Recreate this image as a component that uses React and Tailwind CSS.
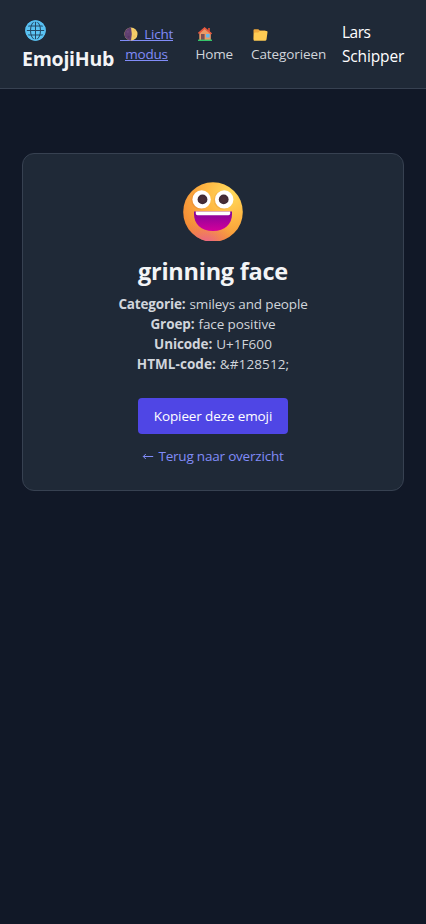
import React from "react";

function Globe() {
  return (
    <svg className="block h-[21px] w-[21px]" viewBox="0 0 21 21" fill="none">
      <defs>
        <linearGradient id="globe" x1="0" y1="0" x2="0" y2="1">
          <stop stopColor="#52b9ee" />
          <stop offset="1" stopColor="#62cdf8" />
        </linearGradient>
      </defs>
      <circle cx="10.5" cy="10.5" r="10.2" fill="url(#globe)" />
      <g stroke="#234865" strokeWidth="1">
        <path d="M10.5 1.3v18.4M1.3 10.5h18.4M3 6h15M3 15h15" />
        <ellipse cx="10.5" cy="10.5" rx="5" ry="9.2" />
      </g>
      <circle cx="10.5" cy="10.5" r="9.5" stroke="#58bff1" strokeWidth="1.5" />
    </svg>
  );
}

function Moon() {
  return (
    <svg className="mt-[4px] block h-[14px] w-[14px]" viewBox="0 0 15 15">
      <circle cx="7.5" cy="7.5" r="7" fill="#f5cd68" />
      <path d="M7.5.5a7 7 0 0 0 0 14Q9.2 7.5 7.5.5Z" fill="#604070" />
      <circle cx="4" cy="5" r="1.3" fill="#6c487a" />
      <circle cx="5" cy="10.5" r="1.2" fill="#553664" />
      <circle cx="11" cy="4" r="1" fill="#eec160" />
      <circle cx="11" cy="10" r="1.2" fill="#edc263" />
    </svg>
  );
}

function House() {
  return (
    <svg className="block h-[14px] w-[14px]" viewBox="0 0 14 14">
      <path d="M10 1h2v5h-2z" fill="#bd4b36" />
      <path d="M1.3 6 6.8 1l6 5v7H1.3z" fill="#e99b67" />
      <path d="M.5 6.5 6.6 1.1 13.5 7" fill="none" stroke="#e5573f" strokeWidth="1.6" />
      <path d="M3 7h3.6v6H3z" fill="#7b5055" />
      <path d="M8 7h3.6v3.5H8z" fill="#60b9ef" />
      <path d="M0 12.6h14V14H0z" fill="#35c56a" />
    </svg>
  );
}

function Folder() {
  return (
    <svg className="block h-[12px] w-[15px]" viewBox="0 0 15 12">
      <path d="M.5 1.2Q.5.2 1.5.2h3.8l1.5 1.3h5q1.2 0 1.2 1.2V11H1.5q-1 0-1-1z" fill="#efa83c" />
      <path d="M5.3 3.4 6.8 2h6.7q1.2 0 1 1.2l-1 7.3q-.2 1.3-1.5 1.3H1.7q-1.2 0-1-1.2l.3-6q.2-1.2 1.3-1.2z" fill="#ffcb53" />
    </svg>
  );
}

function GrinningFace() {
  return (
    <svg className="block h-[60px] w-[60px]" viewBox="0 0 60 60">
      <defs>
        <radialGradient id="skin" cx=".78" cy=".2" r=".9">
          <stop stopColor="#ffdc5e" />
          <stop offset=".45" stopColor="#ffb843" />
          <stop offset="1" stopColor="#f38b35" />
        </radialGradient>
        <radialGradient id="blush" cx=".38" cy="1.08" r=".5">
          <stop stopColor="#e85aa6" />
          <stop offset="1" stopColor="#ee7550" stopOpacity="0" />
        </radialGradient>
        <linearGradient id="mouth" x1="0" y1="0" x2="0" y2="1">
          <stop stopColor="#81049a" />
          <stop offset="1" stopColor="#d3009b" />
        </linearGradient>
        <radialGradient id="pupil">
          <stop stopColor="#4b3038" />
          <stop offset="1" stopColor="#3f2936" />
        </radialGradient>
        <clipPath id="face-edge"><path d="M0 0h60v59H0z" /></clipPath>
      </defs>
      <g clipPath="url(#face-edge)">
        <circle cx="30" cy="30" r="29.8" fill="url(#skin)" />
        <circle cx="30" cy="30" r="29.8" fill="url(#blush)" />
      </g>
      <circle cx="17.5" cy="18" r="9.4" fill="#dc7f35" opacity=".35" />
      <circle cx="40" cy="18" r="9.4" fill="#dc7f35" opacity=".25" />
      <circle cx="18.6" cy="17.4" r="9.2" fill="#fff" />
      <circle cx="41.2" cy="17.4" r="9.2" fill="#fff" />
      <circle cx="19.5" cy="17.4" r="4.9" fill="url(#pupil)" />
      <circle cx="40.7" cy="17.4" r="4.9" fill="url(#pupil)" />
      <path d="M11 29.5h38v2.5c0 10-7 17-19 17S11 42 11 32z" fill="url(#mouth)" />
      <path d="M12.8 29.5h34.4v2q0 1.7-1.7 1.7h-31q-1.7 0-1.7-1.7z" fill="#fff" />
    </svg>
  );
}

function Detail({ label, value, labelClass, valueClass }) {
  return (
    <p className="flex justify-center gap-[4px] whitespace-nowrap">
      <strong className={labelClass}>{label}</strong>
      <span className={valueClass}>{value}</span>
    </p>
  );
}

export default function App() {
  return (
    <div className="min-h-screen bg-[#111827] font-['Open_Sans','Noto_Sans',sans-serif] text-[13.5px] leading-5 text-[#d1d5db]">
      <header className="flex h-[89px] items-center border-b border-[#374151] bg-[#1f2937] pl-[22px] whitespace-nowrap">
        <div className="w-[98px] text-[19.5px] leading-7 font-bold text-[#f3f4f6]">
          <div className="flex h-7 items-center pt-[1px] pl-[3px]"><Globe /></div>
          <div className="h-7 pt-[1px] tracking-[-0.25px]">EmojiHub</div>
        </div>
        <button className="flex w-[53px] flex-col items-center text-[#818cf8]">
          <span className="flex h-5 w-full flex-col">
            <span className="flex h-[17px] w-full items-center justify-between border-b border-[#818cf8] pl-1">
              <Moon />
              <span className="pt-[3px] tracking-[-0.25px]">Licht</span>
            </span>
          </span>
          <span className="h-5">
            <span className="flex h-[17px] items-center border-b border-[#818cf8] pt-[3px] tracking-[-0.25px]">modus</span>
          </span>
        </button>
        <a className="ml-[22px] w-[56px]">
          <span className="flex h-5 items-center pl-[3px]"><House /></span>
          <span className="block pl-[0.5px] tracking-[-0.2px]">Home</span>
        </a>
        <a className="w-[91px]">
          <span className="flex h-5 items-center pt-[2px] pl-[2px]"><Folder /></span>
          <span className="block tracking-[-0.1px]">Categorieen</span>
        </a>
        <div className="text-[15.5px] leading-6 text-white">
          <div className="tracking-[-0.5px]">Lars</div>
          <div className="tracking-[-0.15px]">Schipper</div>
        </div>
      </header>
      <main className="px-[22px] pt-16">
        <section className="flex h-[338px] flex-col items-center rounded-xl border border-[#374151] bg-[#1f2937] pt-7">
          <GrinningFace />
          <h1 className="mt-[13px] text-[23.5px] leading-8 font-bold tracking-[-0.25px] text-[#f3f4f6]">grinning face</h1>
          <div className="mt-[7px]">
            <Detail label="Categorie:" value="smileys and people" labelClass="tracking-[-0.15px]" valueClass="tracking-[-0.15px]" />
            <Detail label="Groep:" value="face positive" labelClass="tracking-[-0.1px]" valueClass="tracking-[-0.1px]" />
            <Detail label="Unicode:" value="U+1F600" labelClass="tracking-[-0.1px]" valueClass="tracking-[0.05px]" />
            <Detail label="HTML-code:" value="&amp;#128512;" labelClass="tracking-[0.05px]" valueClass="tracking-[0.1px]" />
          </div>
          <button className="mt-6 h-9 w-[150px] rounded bg-[#4f46e5] tracking-[-0.12px] text-white">Kopieer deze emoji</button>
          <a className="mt-3 flex items-center gap-[4px] tracking-[-0.2px] text-[#818cf8]">
            <svg className="h-[8px] w-[12px]" viewBox="0 0 12 8" fill="none" stroke="currentColor"><path d="M3.8 2 1.3 4.5 3.8 7M1.3 4.5H11.2" /></svg>
            <span>Terug naar overzicht</span>
          </a>
        </section>
      </main>
    </div>
  );
}
